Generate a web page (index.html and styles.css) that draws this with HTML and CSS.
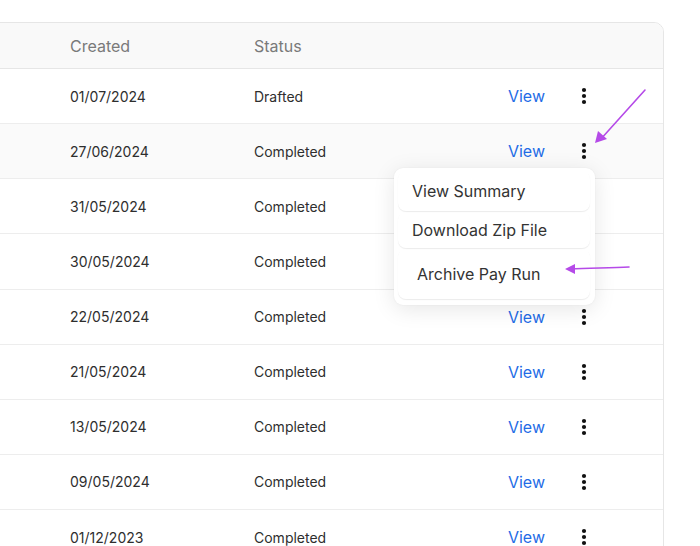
FILE: index.html
```html
<!DOCTYPE html>
<html>
<head>
<meta charset="utf-8">
<link rel="stylesheet" href="styles.css">
</head>
<body>
<div class="page">
  <div class="card">
    <div class="row head">
      <div class="pad"></div>
      <div class="c-date">Created</div>
      <div class="c-status">Status</div>
      <div class="c-view"></div>
      <div class="c-more"></div>
    </div>
    <div class="row"><div class="pad"></div><div class="c-date">01/07/2024</div><div class="c-status">Drafted</div><div class="c-view">View</div><div class="c-more"><svg width="6" height="18" viewBox="0 0 6 18"><circle cx="3" cy="3" r="2.1"/><circle cx="3" cy="9" r="2.1"/><circle cx="3" cy="15" r="2.1"/></svg></div></div>
    <div class="row hover"><div class="pad"></div><div class="c-date">27/06/2024</div><div class="c-status">Completed</div><div class="c-view">View</div><div class="c-more"><svg width="6" height="18" viewBox="0 0 6 18"><circle cx="3" cy="3" r="2.1"/><circle cx="3" cy="9" r="2.1"/><circle cx="3" cy="15" r="2.1"/></svg></div></div>
    <div class="row"><div class="pad"></div><div class="c-date">31/05/2024</div><div class="c-status">Completed</div><div class="c-view covered">View</div><div class="c-more"><svg width="6" height="18" viewBox="0 0 6 18"><circle cx="3" cy="3" r="2.1"/><circle cx="3" cy="9" r="2.1"/><circle cx="3" cy="15" r="2.1"/></svg></div></div>
    <div class="row"><div class="pad"></div><div class="c-date">30/05/2024</div><div class="c-status">Completed</div><div class="c-view covered">View</div><div class="c-more"><svg width="6" height="18" viewBox="0 0 6 18"><circle cx="3" cy="3" r="2.1"/><circle cx="3" cy="9" r="2.1"/><circle cx="3" cy="15" r="2.1"/></svg></div></div>
    <div class="row"><div class="pad"></div><div class="c-date">22/05/2024</div><div class="c-status">Completed</div><div class="c-view">View</div><div class="c-more"><svg width="6" height="18" viewBox="0 0 6 18"><circle cx="3" cy="3" r="2.1"/><circle cx="3" cy="9" r="2.1"/><circle cx="3" cy="15" r="2.1"/></svg></div></div>
    <div class="row"><div class="pad"></div><div class="c-date">21/05/2024</div><div class="c-status">Completed</div><div class="c-view">View</div><div class="c-more"><svg width="6" height="18" viewBox="0 0 6 18"><circle cx="3" cy="3" r="2.1"/><circle cx="3" cy="9" r="2.1"/><circle cx="3" cy="15" r="2.1"/></svg></div></div>
    <div class="row"><div class="pad"></div><div class="c-date">13/05/2024</div><div class="c-status">Completed</div><div class="c-view">View</div><div class="c-more"><svg width="6" height="18" viewBox="0 0 6 18"><circle cx="3" cy="3" r="2.1"/><circle cx="3" cy="9" r="2.1"/><circle cx="3" cy="15" r="2.1"/></svg></div></div>
    <div class="row"><div class="pad"></div><div class="c-date">09/05/2024</div><div class="c-status">Completed</div><div class="c-view">View</div><div class="c-more"><svg width="6" height="18" viewBox="0 0 6 18"><circle cx="3" cy="3" r="2.1"/><circle cx="3" cy="9" r="2.1"/><circle cx="3" cy="15" r="2.1"/></svg></div></div>
    <div class="row"><div class="pad"></div><div class="c-date">01/12/2023</div><div class="c-status">Completed</div><div class="c-view">View</div><div class="c-more"><svg width="6" height="18" viewBox="0 0 6 18"><circle cx="3" cy="3" r="2.1"/><circle cx="3" cy="9" r="2.1"/><circle cx="3" cy="15" r="2.1"/></svg></div></div>
  </div>

  <div class="menu">
    <div class="menu-item first">View Summary</div>
    <div class="menu-item second">Download Zip File</div>
    <div class="menu-item archive">Archive Pay Run</div>
  </div>

  <svg class="arrows" width="700" height="546" viewBox="0 0 700 546">
    <g stroke="#b54ae8" stroke-width="1.6" fill="none" stroke-linecap="round">
      <path d="M645 90 L600 140"/>
      <path d="M629 267 C610 268 590 268 570 269"/>
    </g>
    <g fill="#b54ae8">
      <path d="M595 143 L598 131 L607 139 Z"/>
      <path d="M565 269 L575 264 L575 274 Z"/>
    </g>
  </svg>
</div>
</body>
</html>
```

FILE: styles.css
```css
html, body {
  margin: 0;
  padding: 0;
  background: #ffffff;
}
body {
  font-family: Inter, "Noto Sans", "Liberation Sans", sans-serif;
  color: #2b2b2b;
  overflow: hidden;
  width: 700px;
  height: 546px;
}
.page {
  position: relative;
  width: 700px;
  height: 546px;
  padding-top: 22px;
  box-sizing: border-box;
}
.card {
  margin-left: -20px;
  width: 684px;
  border: 1px solid #e6e6e6;
  border-radius: 10px;
  box-sizing: border-box;
  overflow: hidden;
}
.row {
  display: flex;
  align-items: center;
  height: 55.125px;
  border-bottom: 1px solid #ededed;
  box-sizing: border-box;
  font-size: 14px;
  color: #2e2e2e;
}
.row.head {
  height: 46px;
  background: #f9f9f9;
  border-bottom: 1px solid #e6e6e6;
  font-size: 16px;
  color: #7a7a7a;
}
.row.hover {
  background: #fafafa;
}
.pad {
  width: 89px;
  flex: none;
}
.c-date {
  width: 184px;
  flex: none;
}
.c-status {
  flex: 1;
}
.c-view {
  flex: none;
  font-size: 16px;
  color: #1f6ce6;
}
.c-view.covered {
  visibility: hidden;
}
.c-more {
  width: 78px;
  flex: none;
  margin-right: 40px;
  display: flex;
  justify-content: center;
  align-items: center;
}
.c-more svg {
  fill: #111111;
  display: block;
}
.menu {
  position: absolute;
  left: 394px;
  top: 168px;
  width: 201px;
  height: 137px;
  padding: 3px 5px 5px 4px;
  box-sizing: border-box;
  background: #ffffff;
  border-radius: 9px;
  box-shadow: 0 4px 22px rgba(0, 0, 0, 0.10), 0 0 2px rgba(0, 0, 0, 0.06);
}
.menu-item {
  font-size: 16px;
  color: #333333;
  padding: 0 14px;
  border-radius: 8px;
  box-shadow: 0 1px 1px rgba(0, 0, 0, 0.08);
  display: flex;
  align-items: center;
  margin-bottom: 1px;
}
.menu-item.first {
  height: 40px;
}
.menu-item.second {
  height: 36px;
}
.menu-item.archive {
  padding-left: 19px;
  height: 50px;
}
.arrows {
  position: absolute;
  left: 0;
  top: 0;
  pointer-events: none;
}
```
